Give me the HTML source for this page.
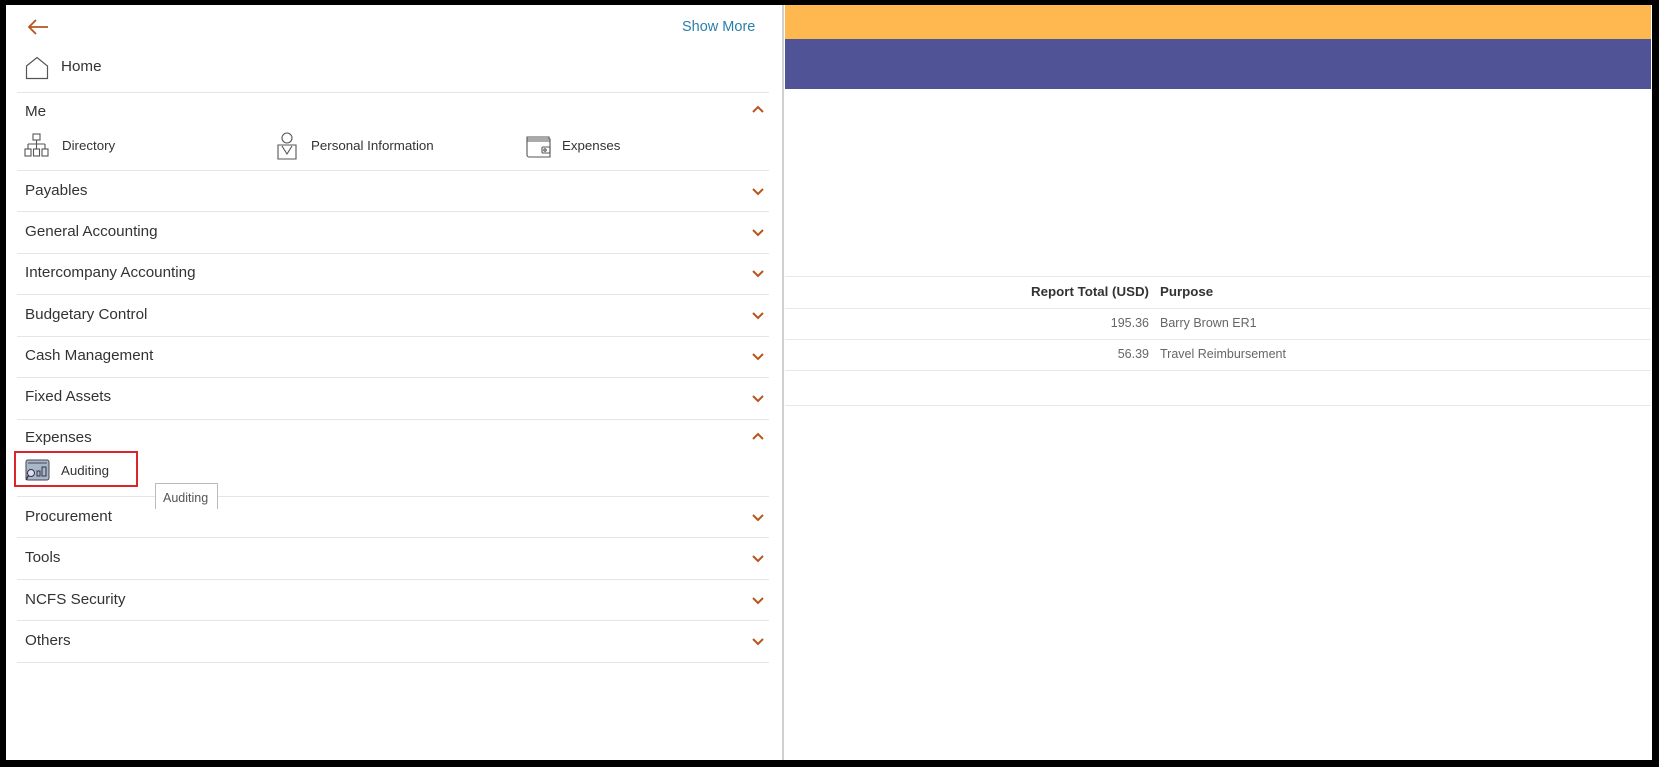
<!DOCTYPE html>
<html><head><meta charset="utf-8"><style>
*{margin:0;padding:0;box-sizing:border-box}
body{width:1665px;height:773px;background:#fff;position:relative;overflow:hidden;font-family:"Liberation Sans",Arial,sans-serif;color:#333}
.frame{position:absolute;left:0;top:0;width:1659px;height:767px;border:5px solid #000;border-width:5px 7px 7px 6px}
.a{position:absolute}
.t{position:absolute;font-size:15.2px;color:#333;line-height:18px}
.s{position:absolute;left:17px;width:752px;height:1px;background:#e5e5e5}
.ch{position:absolute;left:751px;width:14px;height:10px}
.rl{position:absolute;left:785px;width:866px;height:1px;background:#e8e8e8}
.sm{position:absolute;font-size:13px;line-height:16px;color:#666}
</style></head><body>
<div class="frame"></div>
<div class="a" style="left:785px;top:5px;width:866px;height:34px;background:#ffb84f"></div>
<div class="a" style="left:785px;top:39px;width:866px;height:50px;background:#505497"></div>
<div class="a" style="left:782px;top:5px;width:2px;height:755px;background:#d0d0d0"></div>

<svg class="a" style="left:26px;top:18px" width="24" height="18" viewBox="0 0 24 18"><path d="M22 9H3M10 2L3 9l7 7" fill="none" stroke="#b8541e" stroke-width="1.8"/></svg>
<div class="t" style="left:682px;top:18px;color:#2b7fab;font-size:14.5px">Show More</div>

<svg class="a" style="left:25px;top:56px" width="24" height="24" viewBox="0 0 24 24"><path d="M1.5 10L12 1.5 22.5 10V22.5H1.5Z" fill="none" stroke="#555" stroke-width="1.2"/></svg>
<div class="t" style="left:61px;top:58px">Home</div>
<div class="s" style="top:92px"></div>

<div class="t" style="left:25px;top:103px">Me</div>
<svg class="ch" style="top:104px" viewBox="0 0 14 10"><path d="M2 8l5-5 5 5" fill="none" stroke="#b8541e" stroke-width="2"/></svg>

<svg class="a" style="left:24px;top:133px" width="26" height="24" viewBox="0 0 26 24" fill="none" stroke="#555" stroke-width="1.1"><rect x="9" y="1" width="7" height="6"/><path d="M12.5 7v4M4 11h17M4 11v5M12.5 11v5M21 11v5"/><rect x="1" y="16" width="6" height="7"/><rect x="9.5" y="16" width="6" height="7"/><rect x="18" y="16" width="6" height="7"/></svg>
<div class="t" style="left:62px;top:137px;font-size:13.3px">Directory</div>
<svg class="a" style="left:276px;top:132px" width="22" height="28" viewBox="0 0 22 28" fill="none" stroke="#555" stroke-width="1.1"><circle cx="11" cy="6" r="5"/><path d="M2 27V13h18v14ZM6 14l5 8 5-8"/></svg>
<div class="t" style="left:311px;top:137px;font-size:13.3px">Personal Information</div>
<svg class="a" style="left:526px;top:135px" width="26" height="23" viewBox="0 0 26 23" fill="none" stroke="#555" stroke-width="1.1"><path d="M1 4h23V22H3a2 2 0 0 1-2-2V2h22v2M1 6h23"/><rect x="16" y="12" width="8" height="6" rx="1"/><circle cx="19" cy="15" r="1.2"/></svg>
<div class="t" style="left:562px;top:137px;font-size:13.3px">Expenses</div>
<div class="s" style="top:170px"></div>

<div class="t" style="left:25px;top:182px">Payables</div>
<div class="s" style="top:211px"></div>
<div class="t" style="left:25px;top:223px">General Accounting</div>
<div class="s" style="top:253px"></div>
<div class="t" style="left:25px;top:264px">Intercompany Accounting</div>
<div class="s" style="top:294px"></div>
<div class="t" style="left:25px;top:306px">Budgetary Control</div>
<div class="s" style="top:336px"></div>
<div class="t" style="left:25px;top:347px">Cash Management</div>
<div class="s" style="top:377px"></div>
<div class="t" style="left:25px;top:388px">Fixed Assets</div>
<div class="s" style="top:419px"></div>
<div class="t" style="left:25px;top:429px">Expenses</div>
<svg class="ch" style="top:431px" viewBox="0 0 14 10"><path d="M2 8l5-5 5 5" fill="none" stroke="#b8541e" stroke-width="2"/></svg>
<div class="a" style="left:14px;top:451px;width:124px;height:36px;border:2px solid #d9252b"></div>
<svg class="a" style="left:25px;top:459px" width="25" height="23" viewBox="0 0 25 23"><rect x="1" y="1" width="23" height="20" rx="2" fill="#a9b8c9" stroke="#445" stroke-width="1"/><path d="M3 4h19" stroke="#445"/><circle cx="6" cy="14" r="3.5" fill="#dde" stroke="#334"/><path d="M3.5 16.5L1 21" stroke="#334" stroke-width="1.3"/><rect x="12" y="12" width="3" height="5" fill="none" stroke="#334"/><rect x="17" y="8" width="4" height="9" fill="none" stroke="#334"/></svg>
<div class="t" style="left:61px;top:462px;font-size:13.3px">Auditing</div>
<div class="s" style="top:496px"></div>
<div class="a" style="left:155px;top:483px;width:63px;height:26px;border:1px solid #bbb;border-bottom:none;background:#fff;font-size:12.5px;color:#555;padding:7px 0 0 7px">Auditing</div>
<div class="t" style="left:25px;top:508px">Procurement</div>
<div class="s" style="top:537px"></div>
<div class="t" style="left:25px;top:549px">Tools</div>
<div class="s" style="top:579px"></div>
<div class="t" style="left:25px;top:591px">NCFS Security</div>
<div class="s" style="top:620px"></div>
<div class="t" style="left:25px;top:632px">Others</div>
<div class="s" style="top:662px"></div>

<svg class="ch" style="top:187px" viewBox="0 0 14 10"><path d="M2 2l5 5 5-5" fill="none" stroke="#b8541e" stroke-width="2"/></svg>
<svg class="ch" style="top:228px" viewBox="0 0 14 10"><path d="M2 2l5 5 5-5" fill="none" stroke="#b8541e" stroke-width="2"/></svg>
<svg class="ch" style="top:269px" viewBox="0 0 14 10"><path d="M2 2l5 5 5-5" fill="none" stroke="#b8541e" stroke-width="2"/></svg>
<svg class="ch" style="top:311px" viewBox="0 0 14 10"><path d="M2 2l5 5 5-5" fill="none" stroke="#b8541e" stroke-width="2"/></svg>
<svg class="ch" style="top:352px" viewBox="0 0 14 10"><path d="M2 2l5 5 5-5" fill="none" stroke="#b8541e" stroke-width="2"/></svg>
<svg class="ch" style="top:394px" viewBox="0 0 14 10"><path d="M2 2l5 5 5-5" fill="none" stroke="#b8541e" stroke-width="2"/></svg>
<svg class="ch" style="top:513px" viewBox="0 0 14 10"><path d="M2 2l5 5 5-5" fill="none" stroke="#b8541e" stroke-width="2"/></svg>
<svg class="ch" style="top:554px" viewBox="0 0 14 10"><path d="M2 2l5 5 5-5" fill="none" stroke="#b8541e" stroke-width="2"/></svg>
<svg class="ch" style="top:596px" viewBox="0 0 14 10"><path d="M2 2l5 5 5-5" fill="none" stroke="#b8541e" stroke-width="2"/></svg>
<svg class="ch" style="top:637px" viewBox="0 0 14 10"><path d="M2 2l5 5 5-5" fill="none" stroke="#b8541e" stroke-width="2"/></svg>

<div class="rl" style="top:276px"></div>
<div class="rl" style="top:308px"></div>
<div class="rl" style="top:339px"></div>
<div class="rl" style="top:370px"></div>
<div class="rl" style="top:405px"></div>
<div class="sm" style="left:900px;width:249px;text-align:right;top:284px;font-weight:bold;color:#333;font-size:13.3px">Report Total (USD)</div>
<div class="sm" style="left:1160px;top:284px;font-weight:bold;color:#333;font-size:13.3px">Purpose</div>
<div class="sm" style="left:900px;width:249px;text-align:right;top:315px;font-size:12.5px">195.36</div>
<div class="sm" style="left:1160px;top:315px;font-size:12.5px">Barry Brown ER1</div>
<div class="sm" style="left:900px;width:249px;text-align:right;top:346px;font-size:12.5px">56.39</div>
<div class="sm" style="left:1160px;top:346px;font-size:12.5px">Travel Reimbursement</div>
</body></html>
